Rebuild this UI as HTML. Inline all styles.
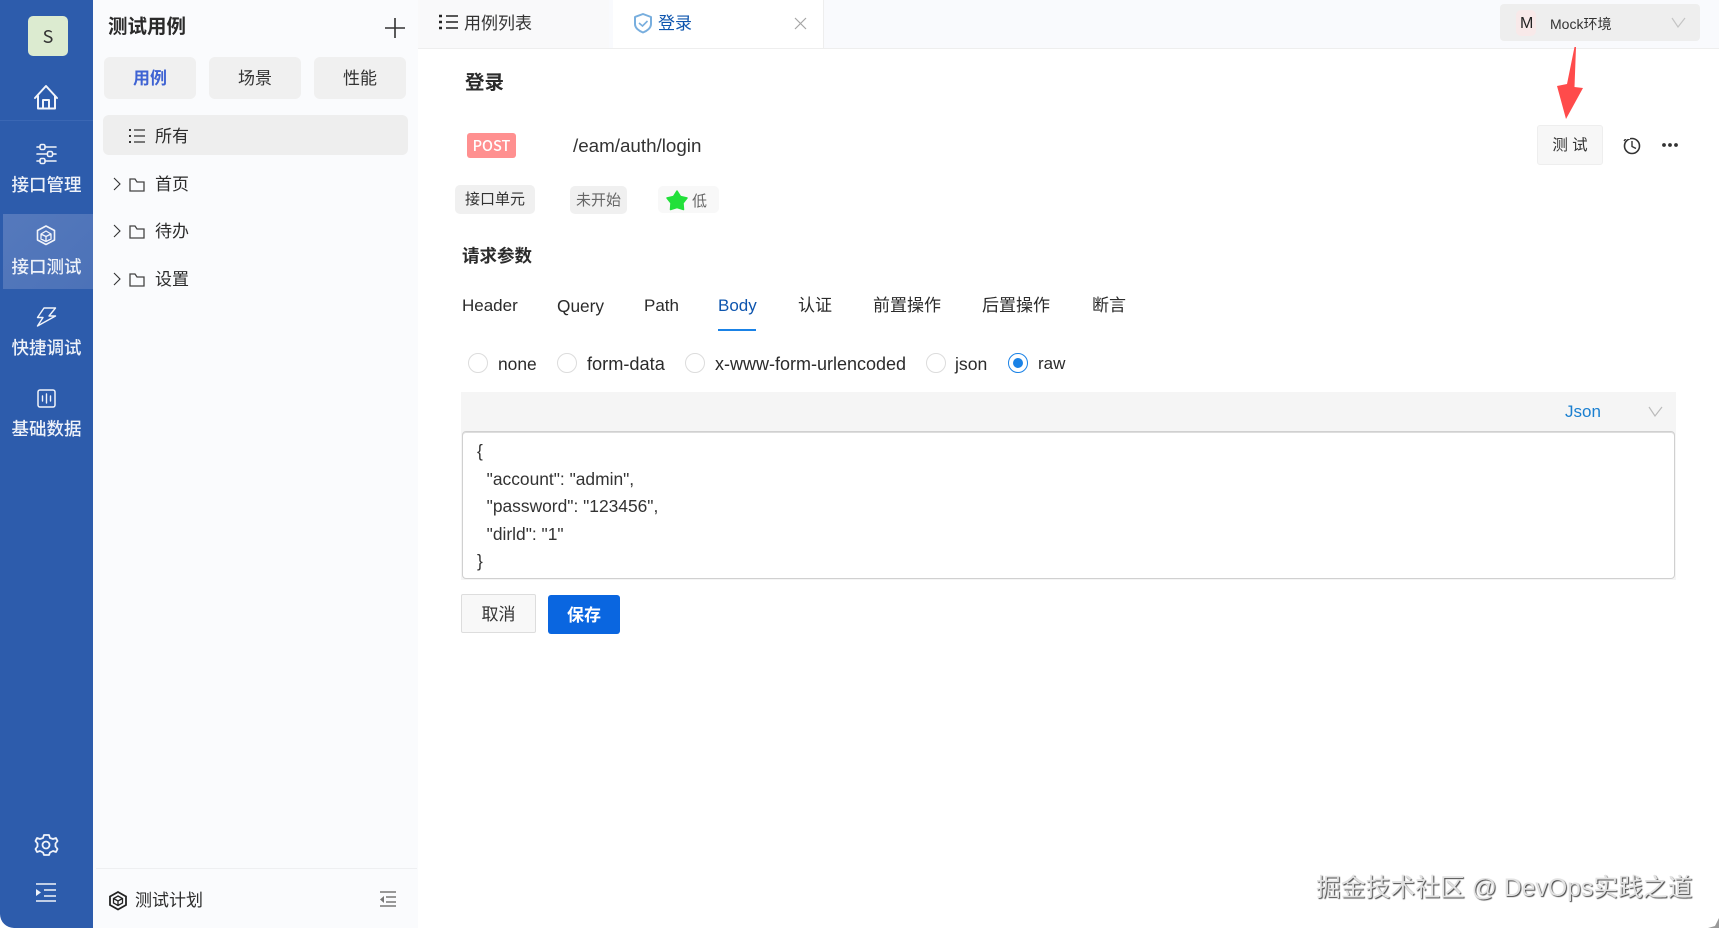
<!DOCTYPE html>
<html lang="zh"><head><meta charset="utf-8"><title>登录</title>
<style>
*{box-sizing:border-box;margin:0;padding:0}
html,body{width:1719px;height:928px;overflow:hidden;background:#fff}
body{position:relative;font-family:"Liberation Sans","Noto Sans CJK SC",sans-serif;color:#2b2b2b}
div,span.t{position:absolute}
.t{white-space:nowrap;font-size:17px;height:26px;line-height:26px}
.c{text-align:center}
.nav{left:0;width:93px;text-align:center;color:#eef2f9;font-size:17.5px;font-weight:500;height:26px;line-height:26px}
.seg{top:57px;width:92px;height:42px;line-height:44px;background:#f0f0f0;border-radius:6px;text-align:center;font-size:17px;color:#333}
.b{font-weight:700}
.radio{width:20px;height:20px;border:1px solid #dcdcdc;border-radius:50%;top:353px;background:#fff}
pre{position:absolute;font-family:"Liberation Sans",sans-serif;font-size:17.4px;line-height:27.5px;left:477px;top:438px;color:#333}
svg{position:absolute;left:0;top:0}
</style></head><body>
<div style="left:0;top:0;width:93px;height:928px;background:#2d5cac;border-bottom-left-radius:14px"></div>
<div style="left:0;top:120px;width:93px;height:1px;background:#3a67b4"></div>
<div style="left:3px;top:214px;width:90px;height:75px;background:linear-gradient(135deg,#5579bc,#4c72b8)"></div>
<div style="left:93px;top:0;width:325px;height:928px;background:#fafbfd"></div>
<div style="left:28px;top:16px;width:40px;height:40px;background:#dcebd0;border-radius:5px;text-align:center;line-height:40px;font-size:18px;color:#333;font-family:'Noto Sans CJK SC',sans-serif">S</div>
<div class="nav" style="top:172px">接口管理</div>
<div class="nav" style="top:254px">接口测试</div>
<div class="nav" style="top:335px">快捷调试</div>
<div class="nav" style="top:416px">基础数据</div>

<div class="t b" style="left:108px;top:14px;font-size:19.5px;color:#2a2a2a">测试用例</div>
<div class="seg b" style="left:104px;color:#3f63d3">用例</div>
<div class="seg" style="left:209px">场景</div>
<div class="seg" style="left:314px">性能</div>
<div style="left:103px;top:115px;width:305px;height:40px;background:#eee;border-radius:6px"></div>
<div class="t" style="left:155px;top:124px">所有</div>
<div class="t" style="left:155px;top:172px">首页</div>
<div class="t" style="left:155px;top:219px">待办</div>
<div class="t" style="left:155px;top:267px">设置</div>
<div style="left:96px;top:868px;width:321px;height:1px;background:#eeeff1"></div>
<div class="t" style="left:135px;top:888px">测试计划</div>

<div style="left:418px;top:0;width:1301px;height:49px;background:#f9fafd;border-bottom:1px solid #eeeeee"></div>
<div style="left:418px;top:0;width:191px;height:48px;background:#f9f9fa"></div>
<div style="left:613px;top:0;width:211px;height:48px;background:#fff;border-right:1px solid #eee"></div>
<div class="t" style="left:464px;top:11px;color:#333">用例列表</div>
<div class="t" style="left:658px;top:11px;color:#0e55ae">登录</div>
<div style="left:1500px;top:4px;width:200px;height:37px;background:#eee;border-radius:4px"></div>
<div style="left:1516px;top:10px;width:20px;height:26px;background:#f8e9e9;border-radius:5px"></div>
<div class="t" style="left:1520px;top:11px;font-size:16px;color:#222">M</div>
<div class="t" style="left:1550px;top:11px;font-size:14px;color:#333">Mock环境</div>

<div class="t b" style="left:465px;top:70px;font-size:19.5px">登录</div>
<div style="left:467px;top:133px;width:49px;height:25px;background:#ff9090;border-radius:3px;color:#fff;text-align:center;line-height:26px;font-size:14.5px;font-weight:500;font-family:'Noto Sans CJK SC',sans-serif">POST</div>
<div class="t" style="left:573px;top:133px;font-size:18.8px;color:#333">/eam/auth/login</div>
<div style="left:1537px;top:125px;width:66px;height:40px;background:#f7f7f7;border:1px solid #eee;border-radius:3px;text-align:center;line-height:39px;font-size:15.5px;color:#333">测 试</div>

<div style="left:455px;top:185px;width:80px;height:29px;background:#f0f0f0;border-radius:5px;text-align:center;line-height:30px;font-size:15px;color:#333">接口单元</div>
<div style="left:570px;top:186px;width:57px;height:28px;background:#f0f0f0;border-radius:5px;text-align:center;line-height:30px;font-size:15px;color:#666">未开始</div>
<div style="left:658px;top:186px;width:61px;height:27px;background:#f8f8f8;border-radius:5px"></div>
<div class="t" style="left:692px;top:189px;font-size:15px;color:#666">低</div>

<div class="t b" style="left:462px;top:243px;font-size:17.5px">请求参数</div>
<div class="t" style="left:462px;top:293px">Header</div>
<div class="t" style="left:557px;top:293px;font-size:17.3px">Query</div>
<div class="t" style="left:644px;top:293px">Path</div>
<div class="t" style="left:718px;top:293px;color:#0e55ae">Body</div>
<div class="t" style="left:798px;top:293px">认证</div>
<div class="t" style="left:873px;top:293px">前置操作</div>
<div class="t" style="left:982px;top:293px">后置操作</div>
<div class="t" style="left:1092px;top:293px">断言</div>
<div style="left:718px;top:329px;width:38px;height:2px;background:#1a82e6"></div>

<div class="radio" style="left:468px"></div><div class="t" style="left:498px;top:351px;font-size:17.4px">none</div>
<div class="radio" style="left:557px"></div><div class="t" style="left:587px;top:351px;font-size:18.2px">form-data</div>
<div class="radio" style="left:685px"></div><div class="t" style="left:715px;top:351px;font-size:18px">x-www-form-urlencoded</div>
<div class="radio" style="left:926px"></div><div class="t" style="left:955px;top:351px;font-size:17.6px">json</div>
<div class="radio" style="left:1008px;border-color:#1a82e6"></div><div style="left:1013px;top:358px;width:10px;height:10px;border-radius:50%;background:#1a82e6"></div><div class="t" style="left:1038px;top:351px">raw</div>

<div style="left:461px;top:392px;width:1215px;height:188px;background:#f5f5f5"></div>
<div class="t" style="left:1565px;top:399px;color:#1a7fd0">Json</div>
<div style="left:462px;top:431px;width:1213px;height:148px;background:#fff;border:1px solid #d0d0d0;border-radius:4px;box-shadow:inset 0 1px 0 #ddd"></div>
<pre>{
  "account": "admin",
  "password": "123456",
  "dirld": "1"
}</pre>

<div style="left:461px;top:594px;width:75px;height:39px;background:#f8f8f8;border:1px solid #ddd;border-radius:2px;text-align:center;line-height:39px;font-size:17px;color:#333">取消</div>
<div style="left:548px;top:595px;width:72px;height:39px;background:#0a66e0;border-radius:3px;text-align:center;line-height:41px;font-size:17px;font-weight:700;color:#fff">保存</div>

<div class="t" style="left:1316px;top:873px;font-size:24.8px;height:32px;line-height:32px;color:#e2e2e2;text-shadow:1px 1px 1px #444">掘金技术社区 @ DevOps实践之道</div>

<svg width="1719" height="928" viewBox="0 0 1719 928" fill="none">
<g stroke="#f1f4fa" stroke-width="2" stroke-linejoin="round" stroke-linecap="round">
<path d="M35 98 46 86 57 98M38 96V108.500H55V96M43 108.500V100H49V108.500"/>
<path d="M37 147H40M45 147H56M37 154H47M53 154H56M37 161H40M45 161H56" stroke-width="1.600"/>
<rect x="40" y="144.500" width="5" height="5" rx="1.500" stroke-width="1.500"/><rect x="47.500" y="151.500" width="5" height="5" rx="1.500" stroke-width="1.500"/><rect x="40" y="158.500" width="5" height="5" rx="1.500" stroke-width="1.500"/>
<path d="M46 226 54.500 230.500V240L46 244.500 37.500 240V230.500Z" stroke-width="1.600"/>
<path d="M46 231 51 234V239L46 241.500 41 239V234ZM41 234 46 236.500 51 234M46 236.500V241.500" stroke-width="1.300"/>
<path d="M44 308H55.500L49 316H55.500L37.500 326 43 317.500H37.500Z" stroke-width="1.400"/>
<rect x="38" y="390" width="17" height="17" rx="2" stroke-width="1.500"/>
<path d="M42.500 396V401M46.500 394V403M50.500 396V401" stroke-width="1.400"/>
<path d="M46 835 49 835 50 838 53 839 56 838 57.500 841 55.500 843.500V846.500L57.500 849 56 852 53 851 50 852.500 49 855H44L43 852.500 40 851 37 852 35.500 849 37.500 846.500V843.500L35.500 841 37 838 40 839 43 838 44 835Z" stroke-width="1.800"/>
<circle cx="46" cy="845" r="3.500" stroke-width="1.800"/>
</g>
<path d="M36 884H56M44 890H56M44 896H56M36 901H56" stroke="#f1f4fa" stroke-width="1.600"/>
<path d="M36 889V896L41 892.500Z" fill="#f1f4fa"/>

<path d="M385 28H405M395 18V38" stroke="#333" stroke-width="1.600"/>
<g stroke="#333" stroke-width="1.300">
<path d="M134 130H145M134 136H145M134 142H145"/>
<path d="M129 130H131M129 136H131M129 142H131" stroke-width="2"/>
</g>
<g stroke="#333" stroke-width="1.100">
<path d="M114 178 120 184 114 190M114 225 120 231 114 237M114 273 120 279 114 285"/>
</g>
<g stroke="#444" stroke-width="1.300">
<path d="M130 179V191H144V182H137L135 179ZM130 226V238H144V229H137L135 226ZM130 274V286H144V277H137L135 274Z"/>
</g>
<path d="M118 892 126 896.500V905L118 909.500 110 905V896.500Z" stroke="#222" stroke-width="1.800"/>
<path d="M118 896 122.500 898.500V903L118 905.500 113.500 903V898.500ZM113.500 898.500 118 901 122.500 898.500M118 901V905.500" stroke="#222" stroke-width="1.300"/>
<path d="M380 892H396M386 897H396M386 902H396M380 906H396" stroke="#777" stroke-width="1.400"/>
<path d="M384 896V903L380 899.500Z" fill="#777"/>

<g stroke="#222" stroke-width="1.600"><path d="M446 16H458M446 22H458M446 28H458"/></g>
<path d="M439 16H442M439 22H442M439 28H442" stroke="#222" stroke-width="2.400"/>
<path d="M643 14 651 17V24C651 28 647 31 643 32.500 639 31 635 28 635 24V17Z" stroke="#78aede" stroke-width="2" stroke-linejoin="round"/>
<path d="M639 23 642.500 26 647.500 21" stroke="#78aede" stroke-width="1.600"/>
<path d="M795 18 806 29M806 18 795 29" stroke="#a5a5a5" stroke-width="1.200"/>
<path d="M1672 18 1678 27 1685 18" stroke="#c4c4c4" stroke-width="1.200"/>
<path d="M1649 407 1655 416 1662 407" stroke="#bbb" stroke-width="1.200"/>

<path d="M1574.500 47H1576L1574.500 87 1583 88 1566 119 1557 86 1567 84Z" fill="#ff4b4b"/>
<circle cx="1632" cy="146" r="7.500" stroke="#333" stroke-width="1.600"/>
<path d="M1624 141 1626 138.500M1632 141V146.500L1636 148.500" stroke="#333" stroke-width="1.400"/>
<rect x="1624" y="135" width="6" height="4" fill="#fff"/>
<circle cx="1664" cy="145" r="1.900" fill="#333"/><circle cx="1670" cy="145" r="1.900" fill="#333"/><circle cx="1676" cy="145" r="1.900" fill="#333"/>
<path d="M677 191 680.500 196.500 687 198 683 203 683.500 209.500 677 207.500 670.500 209.500 671 203 667 198 673.500 196.500Z" fill="#22e03a" stroke="#22e03a" stroke-width="1.500" stroke-linejoin="round"/>
<path d="M1719 918 1715 926 1708 928H1719Z" fill="#555" opacity=".6"/>
</svg>
</body></html>
